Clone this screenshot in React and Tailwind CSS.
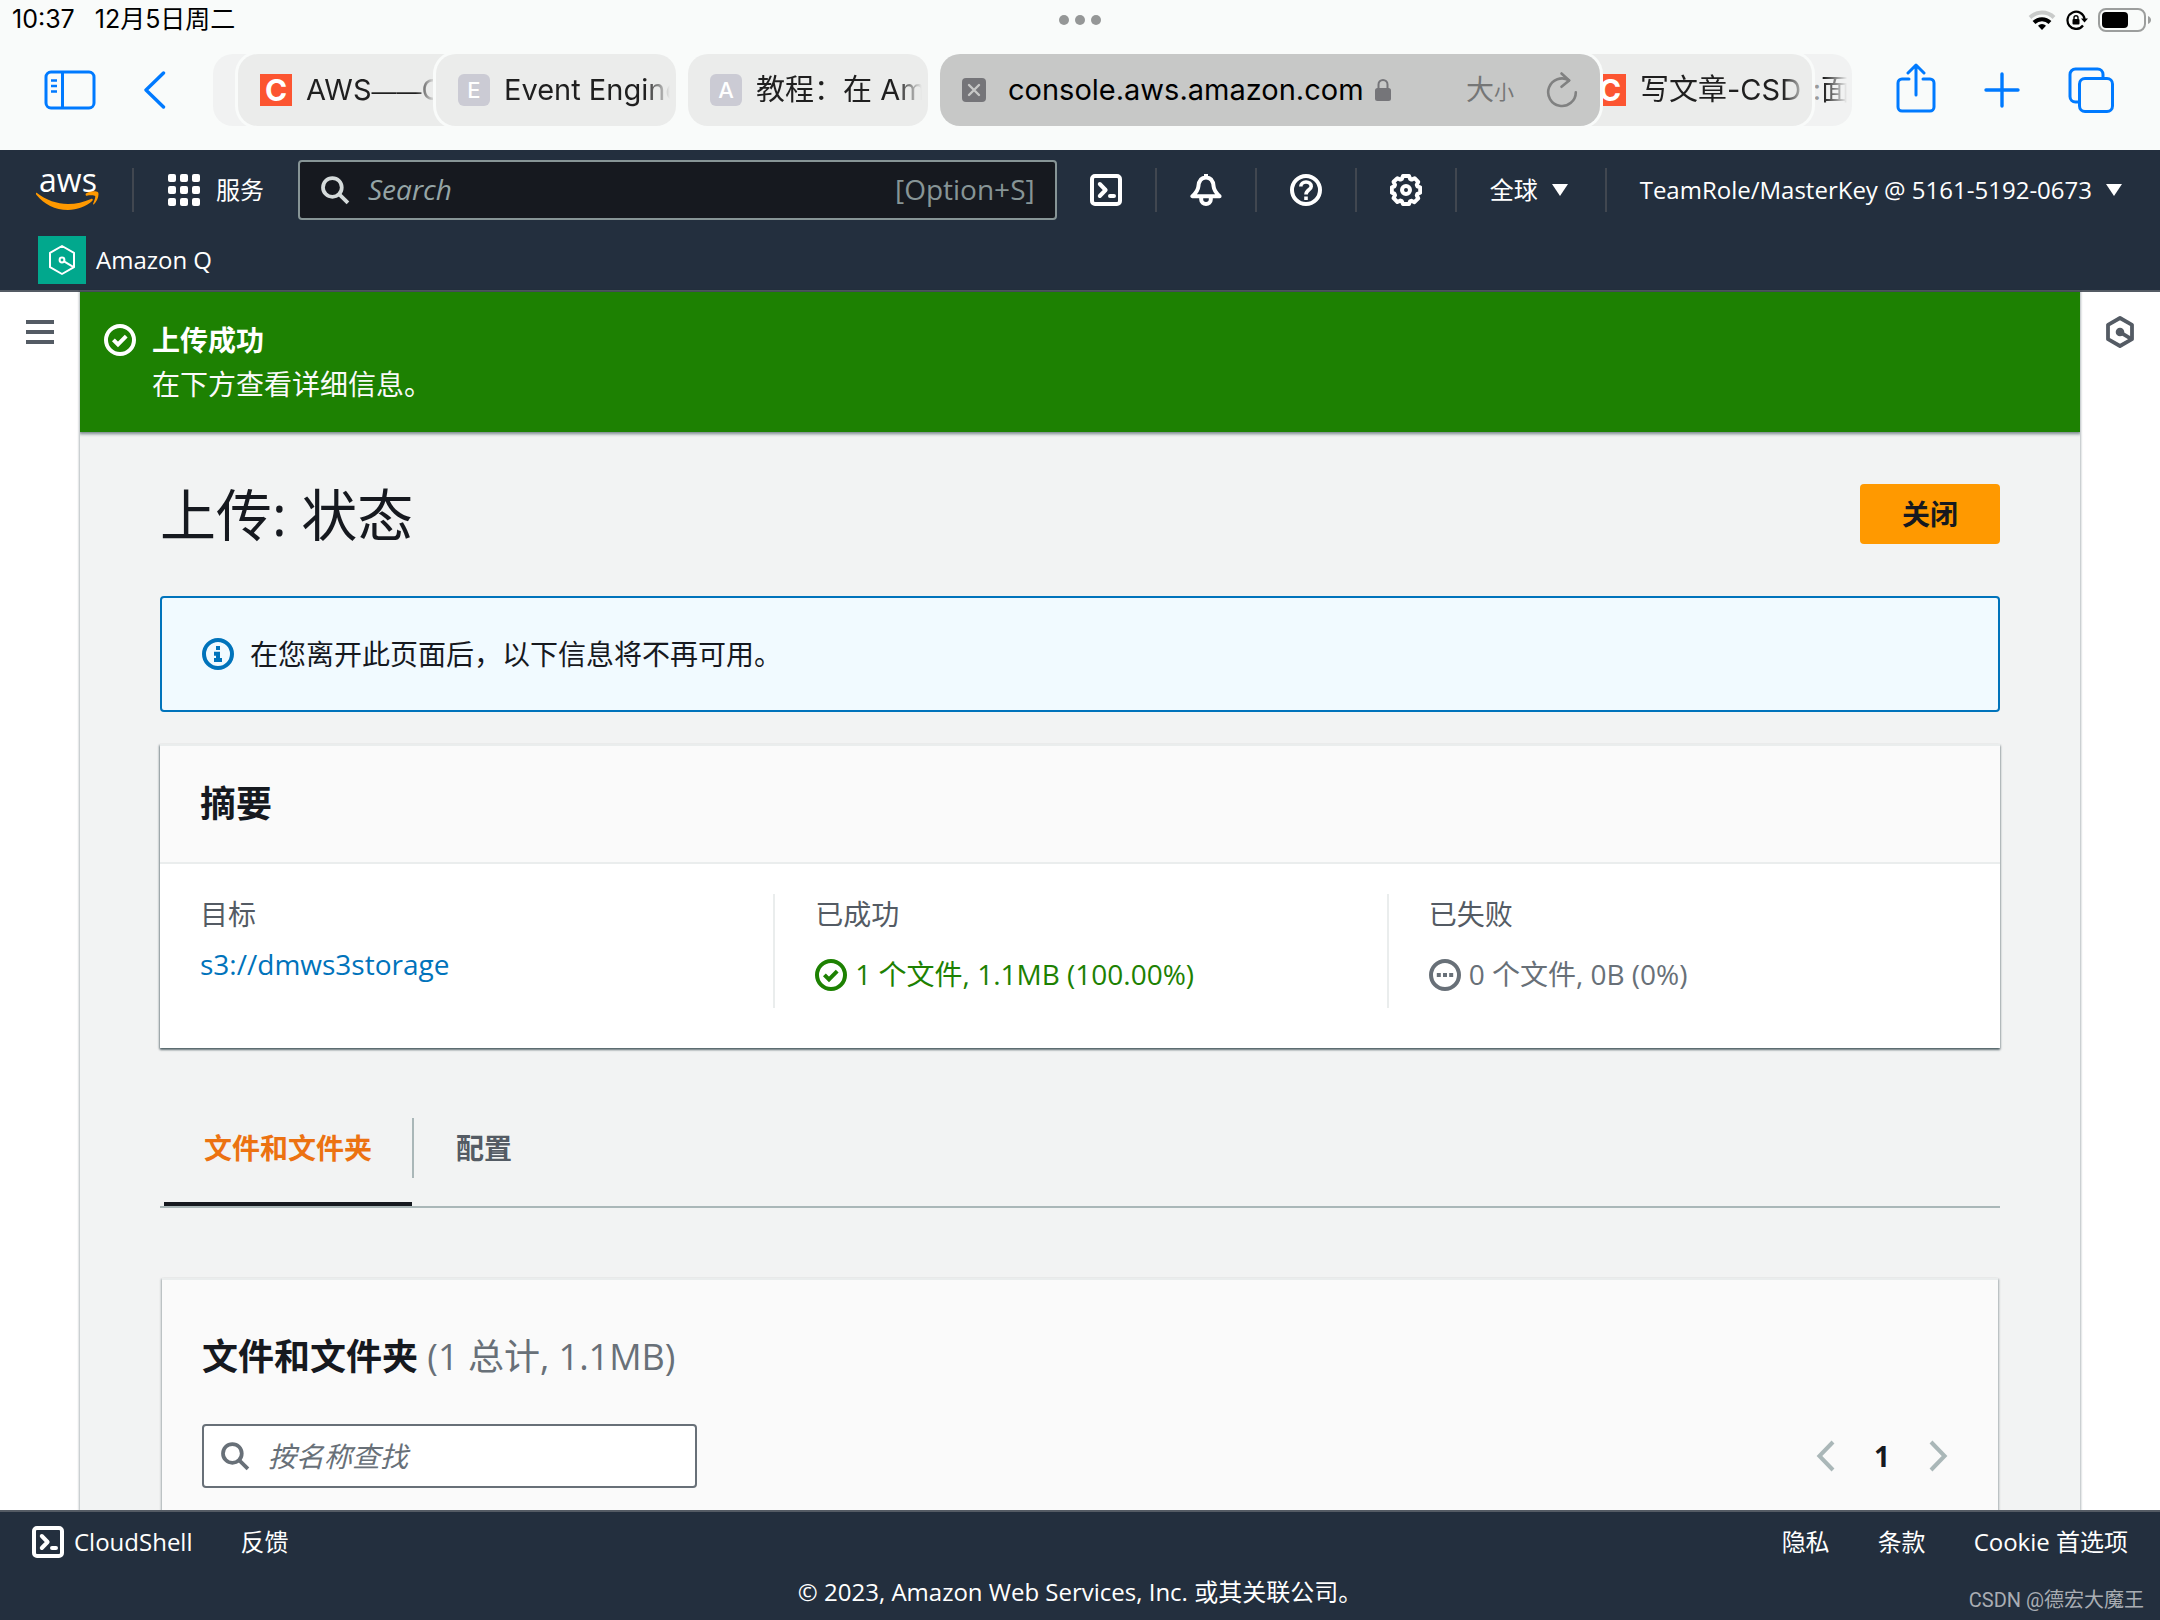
import React from "react";

const awsFont = "font-['Open_Sans','Noto_Sans_CJK_SC',sans-serif]";
const sysFont = "font-['Inter','Noto_Sans_CJK_SC',sans-serif]";

/* ---------- icons ---------- */

function Icon({ className = "size-8", children, ...rest }) {
  return (
    <svg
      viewBox="0 0 16 16"
      className={`shrink-0 ${className}`}
      fill="none"
      stroke="currentColor"
      strokeWidth="2"
      strokeLinejoin="round"
      aria-hidden="true"
      {...rest}
    >
      {children}
    </svg>
  );
}

const CheckCircle = (p) => (
  <Icon {...p}>
    <circle cx="8" cy="8" r="7" />
    <path d="M4.7 7.9l2.3 2.3 4.1-4.1" strokeLinejoin="miter" />
  </Icon>
);
const InfoCircle = (p) => (
  <Icon {...p}>
    <circle cx="8" cy="8" r="7" />
    <path d="M8 11V7.9H6M6 11h4M7 5h2" strokeLinejoin="miter" />
  </Icon>
);
const PendingCircle = (p) => (
  <Icon {...p}>
    <circle cx="8" cy="8" r="7" />
    <path d="M3.9 8h2M7 8h2M10.1 8h2" />
  </Icon>
);
const SearchIcon = (p) => (
  <Icon {...p}>
    <circle cx="6.6" cy="6.6" r="5" />
    <path d="M10.3 10.3l4.6 4.6" />
  </Icon>
);
const ShellIcon = (p) => (
  <Icon {...p}>
    <rect x="1" y="1" width="14" height="14" rx="1.5" />
    <path d="M4.9 5L7.8 8l-2.9 3M10 11h2" strokeLinecap="round" />
  </Icon>
);
const BellIcon = (p) => (
  <Icon {...p}>
    <path d="M8 0v2M1.2 11.1h13.6C13 9.5 12 8.3 11.8 6.2 11.6 3.5 10.3 1.7 8 1.7S4.4 3.5 4.2 6.2C4 8.3 3 9.5 1.2 11.1z" />
    <path d="M5.6 11.5v1.3C5.6 14.2 6.7 15 8 15s2.400-.8 2.400-2.200v-1.300" />
  </Icon>
);
const HelpIcon = (p) => (
  <Icon {...p}>
    <circle cx="8" cy="8" r="7" />
    <path d="M5.4 6.3c0-1.400 1.100-2.300 2.600-2.300s2.600.9 2.600 2.200c0 1.700-2.600 1.700-2.600 4M8 11.200v1.800" strokeWidth="1.8" />
  </Icon>
);
const GearIcon = (p) => (
  <Icon {...p}>
    <path d="M6.5 1h3l.6 1.500.7.3 1.500-.7 1.800 1.800-.7 1.500.3.800 1.400.500v2.600l-1.400.6-.3.800.7 1.500-1.900 1.900-1.500-.7-.7.300L9.500 15h-3l-.6-1.400-.7-.3-1.500.7-1.900-1.900.7-1.500-.3-.8L.9 9.300V6.700l1.300-.5.3-.8-.7-1.500 1.900-1.800 1.500.7.700-.3z" />
    <circle cx="8" cy="8" r="2" />
  </Icon>
);
const QIcon = ({ stroke = 1.5, dot = false, className }) => (
  <Icon className={className} strokeWidth={stroke}>
    <path d="M8 1l6 3.400v7.200L8 15l-6-3.400V4.400z" />
    <circle cx="8" cy="8" r="1.200" fill={dot ? "currentColor" : "none"} />
    <path d="M9 8.700l4.600 2.700" />
  </Icon>
);
const ChevronIcon = ({ flip }) => (
  <Icon className={flip ? "block size-8 rotate-180" : "block size-8"}>
    <path d="M11.5 1L4.7 8l6.800 7" strokeLinejoin="miter" />
  </Icon>
);
const Caret = () => (
  <svg viewBox="0 0 16 12" className="h-3 w-4 shrink-0" fill="currentColor" aria-hidden="true">
    <path d="M0 0h16L8 12z" />
  </svg>
);
const AwsLogo = () => (
  <span className="flex w-16 flex-col items-center">
    <span className="text-[32px] leading-[22px] font-medium text-white">aws</span>
    <svg viewBox="0 0 64 20" className="h-5 w-16" aria-hidden="true">
      <path d="M1 2c9 7 20 11 31 11 8 0 16-2 23-5 1.500-.6 2.500.8 1.200 2C50 15.500 41 19 32 19 19 19 8 13 .5 4-.5 2.500 0 1.500 1 2z" fill="#ff9900" />
      <path d="M50 2.500c3.500-2.500 10-3 12-1.300 1.500 2-.5 9-4 12-.6.5-1.200.2-.9-.5 1-2.300 2.700-6.500 2-7.600-.7-1-5.500-.8-8.400-.4-1 .1-1.500-1.500-.7-2.200z" fill="#ff9900" />
    </svg>
  </span>
);

/* ---------- tablet status bar and browser toolbar ---------- */

function StatusBar() {
  return (
    <div className="grid h-10 grid-cols-[1fr_auto_1fr] items-center px-2 text-[25px] text-black">
      <div className="flex gap-5 pl-1">
        <span>10:37</span>
        <span>12月5日周二</span>
      </div>
      <div className="flex gap-1.5">
        <i className="size-2.5 rounded-full bg-[#959797]" />
        <i className="size-2.5 rounded-full bg-[#959797]" />
        <i className="size-2.5 rounded-full bg-[#959797]" />
      </div>
      <div className="flex items-center justify-end gap-2.5">
        <svg viewBox="0 0 28 20" className="h-5 w-7" fill="none" strokeWidth="4" aria-label="Wi-Fi">
          <path d="M2 7.500a17 17 0 0 1 24 0" stroke="#c9cbca" />
          <path d="M6 12.500a11.500 11.500 0 0 1 16 0" stroke="#000" />
          <path d="M14 20l-4-4.200a5.500 5.500 0 0 1 8 0z" fill="#000" />
        </svg>
        <svg viewBox="0 0 22 20" className="h-5 w-[22px]" fill="none" stroke="#000" strokeWidth="2.200" aria-label="Rotation lock">
          <path d="M17 15.500A8.600 8.600 0 1 1 18.600 9" />
          <path d="M15 8.500h7l-3.500 4z" fill="#000" stroke="none" />
          <rect x="6.500" y="9" width="7" height="5.500" rx="1" fill="#000" stroke="none" />
          <path d="M8 9.500V7.800a2 2 0 0 1 4 0v1.700" strokeWidth="1.400" />
        </svg>
        <svg viewBox="0 0 54 24" className="h-6 w-[54px]" aria-label="Battery">
          <rect x="1" y="1" width="46" height="22" rx="7" fill="none" stroke="#9c9e9d" strokeWidth="2" />
          <rect x="4" y="4" width="26" height="16" rx="4" fill="#000" />
          <path d="M50 8c2 .8 3 2.300 3 4s-1 3.200-3 4z" fill="#9c9e9d" />
        </svg>
      </div>
    </div>
  );
}

const CsdnMark = () => (
  <span className="flex size-8 shrink-0 items-center justify-center bg-[#fc5531] text-[30px] leading-8 font-bold text-white">C</span>
);
const LetterMark = ({ children }) => (
  <span className="flex size-8 shrink-0 items-center justify-center rounded-md bg-[#cbcbd4] text-[22px] font-medium text-white">{children}</span>
);

function Tab({ mark, label, className }) {
  return (
    <button
      type="button"
      className={`flex h-18 w-60 shrink-0 items-center gap-3.5 overflow-hidden rounded-[20px] pl-[22px] text-[#1f1f1f] ring-3 ring-[#f9fbfa] ${className}`}
    >
      {mark}
      <span className="flex-1 overflow-hidden text-left whitespace-nowrap [mask-image:linear-gradient(to_right,black_85%,transparent)]">{label}</span>
    </button>
  );
}

function BrowserBar() {
  const tool = "shrink-0 text-[#007aff]";
  return (
    <div className="flex h-[110px] items-start pt-3.5 pr-[46px] pl-11 text-[29px]">
      <div className="flex h-18 items-center gap-12">
        <button type="button" aria-label="Sidebar" className={tool}>
          <svg viewBox="0 0 52 40" className="h-10 w-[52px]" fill="none" stroke="currentColor" strokeWidth="3">
            <rect x="2" y="2" width="48" height="36" rx="5" />
            <path d="M18.500 2v36" />
            <path d="M7 10.500h6M7 16h6M7 21.500h6" strokeWidth="2.600" />
          </svg>
        </button>
        <button type="button" aria-label="Back" className={tool}>
          <svg viewBox="0 0 22 38" className="h-[38px] w-[22px]" fill="none" stroke="currentColor" strokeWidth="3.400" strokeLinecap="round" strokeLinejoin="round">
            <path d="M19.500 2L2 19l17.500 17" />
          </svg>
        </button>
      </div>

      <div className="ml-[47px] flex flex-1">
        <Tab className="bg-[#f1f2f2]" />
        <Tab
          className="z-10 -ml-[215px] bg-[#ebeceb] pr-[43px]"
          mark={<CsdnMark />}
          label={<>AWS<span className="font-['Liberation_Sans'] text-[25px]">——</span>C</>}
        />
        <Tab className="z-20 -ml-[42px] bg-[#ebeceb] pr-1.5" mark={<LetterMark>E</LetterMark>} label="Event Engine" />
        <Tab className="z-20 ml-3 bg-[#ebeceb] pr-1.5" mark={<LetterMark>A</LetterMark>} label="教程：在 Am" />
        <div className="z-30 ml-3 flex h-18 flex-1 items-center rounded-[20px] bg-[#c7c8c7] px-[22px] ring-3 ring-[#f9fbfa]">
          <button type="button" aria-label="Close tab" className="shrink-0">
            <svg viewBox="0 0 24 24" className="block size-6">
              <rect width="24" height="24" rx="4" fill="#757579" />
              <path d="M7 7l10 10M17 7L7 17" stroke="#c7c8c7" strokeWidth="2.400" strokeLinecap="round" />
            </svg>
          </button>
          <span className="ml-[22px] text-black">console.aws.amazon.com</span>
          <svg viewBox="0 0 18 24" className="ml-2.5 h-6 w-[18px] shrink-0" aria-label="Secure">
            <rect x="1" y="10" width="16" height="13" rx="2.500" fill="#757579" />
            <path d="M4.500 11V6.500a4.500 4.500 0 0 1 9 0V11" fill="none" stroke="#757579" strokeWidth="2" />
          </svg>
          <button type="button" className="ml-auto text-[28px] text-[#757676]">
            大<span className="text-[20px]">小</span>
          </button>
          <button type="button" aria-label="Reload" className="ml-8 shrink-0 text-[#808181]">
            <svg viewBox="0 0 32 38" className="block h-[38px] w-8" fill="none" stroke="currentColor" strokeWidth="2.600" strokeLinecap="round" strokeLinejoin="round">
              <path d="M23 9.300a13.800 13.800 0 1 0 6.800 11.900" />
              <path d="M15.500 2.500l7.700 7-7.700 6.300" />
            </svg>
          </button>
        </div>
        <Tab className="z-20 -ml-7 bg-[#ebeceb] pr-1" mark={<CsdnMark />} label="写文章-CSD" />
        <button type="button" className="-ml-50 flex h-18 w-60 shrink-0 items-center justify-end rounded-[20px] bg-[#f1f2f2] pr-0.5 text-[#1f1f1f]">
          <span className="text-[#9a9b9b]">:</span>
          <span className="[mask-image:linear-gradient(to_right,black_10%,transparent_90%)]">面</span>
        </button>
      </div>

      <div className="ml-11 flex h-18 items-center gap-12">
        <button type="button" aria-label="Share" className={tool}>
          <svg viewBox="0 0 40 50" className="mb-1 block h-[50px] w-10" fill="none" stroke="currentColor" strokeWidth="3" strokeLinecap="round" strokeLinejoin="round">
            <path d="M13 16H6a4 4 0 0 0-4 4v24a4 4 0 0 0 4 4h28a4 4 0 0 0 4-4V20a4 4 0 0 0-4-4h-7" />
            <path d="M20 32V2.500M12 10l8-8 8 8" />
          </svg>
        </button>
        <button type="button" aria-label="New tab" className={tool}>
          <svg viewBox="0 0 36 36" className="block size-9" stroke="currentColor" strokeWidth="3.400" strokeLinecap="round">
            <path d="M18 2v32M2 18h32" />
          </svg>
        </button>
        <button type="button" aria-label="Tab overview" className={tool}>
          <svg viewBox="0 0 46 46" className="block size-[46px]" fill="none" stroke="currentColor" strokeWidth="3">
            <path d="M11 35H7.500A5.500 5.500 0 0 1 2 29.500v-22A5.500 5.500 0 0 1 7.500 2h22A5.500 5.500 0 0 1 35 7.500V11" />
            <rect x="11.500" y="11.500" width="33" height="33" rx="5.500" />
          </svg>
        </button>
      </div>
    </div>
  );
}

/* ---------- console ---------- */

const Divider = () => <i className="block h-11 w-0.5 shrink-0 bg-[#414750]" />;

function ConsoleHeader() {
  return (
    <header className="border-b-2 border-[#545b64] bg-[#232f3e] text-2xl text-white">
      <div className="flex h-20 items-center pr-[38px] pl-9">
        <a href="#home" aria-label="AWS">
          <AwsLogo />
        </a>
        <div className="ml-8">
          <Divider />
        </div>
        <button type="button" className="ml-[34px] flex shrink-0 items-center gap-4">
          <svg viewBox="0 0 32 32" className="size-8" fill="currentColor" aria-hidden="true">
            {[0, 12, 24].map((y) =>
              [0, 12, 24].map((x) => <rect key={`${x}-${y}`} x={x} y={y} width="8" height="8" rx="2" />)
            )}
          </svg>
          服务
        </button>
        <label className="ml-[34px] flex h-15 flex-1 items-center rounded-sm border-2 border-[#879596] bg-[#16191f] px-5 text-[28px] text-[#879596]">
          <SearchIcon className="size-[30px] text-[#d5dbdb]" />
          <input type="text" aria-label="Search" placeholder="Search" className="ml-[18px] min-w-0 flex-1 bg-transparent outline-none placeholder:text-[#95a5a6] placeholder:italic" />
          <span>[Option+S]</span>
        </label>
        <div className="ml-[33px] flex items-center gap-[33px]">
          <button type="button" aria-label="CloudShell"><ShellIcon className="block size-8" /></button>
          <Divider />
          <button type="button" aria-label="Notifications"><BellIcon className="block size-8" /></button>
          <Divider />
          <button type="button" aria-label="Help"><HelpIcon className="block size-8" /></button>
          <Divider />
          <button type="button" aria-label="Settings"><GearIcon className="block size-8" /></button>
          <Divider />
          <button type="button" className="flex items-center gap-3.5 pr-1 whitespace-nowrap">全球 <Caret /></button>
          <Divider />
          <button type="button" className="flex items-center gap-3.5 whitespace-nowrap">
            TeamRole/MasterKey @ 5161-5192-0673 <Caret />
          </button>
        </div>
      </div>
      <div className="flex h-15 items-center pl-9.5">
        <a href="#amazon-q" className="flex items-center gap-2.5">
          <span className="flex size-12 items-center justify-center bg-[#01a88d]">
            <QIcon className="size-8" stroke={1} />
          </span>
          Amazon Q
        </a>
      </div>
    </header>
  );
}

function Summary() {
  return (
    <section className="mt-8 border-t-2 border-[#eaeded] bg-white shadow-[0_2px_2px_0_rgba(0,28,36,0.5),1px_1px_2px_0_rgba(0,28,36,0.15),-1px_1px_2px_0_rgba(0,28,36,0.3)]">
      <div className="flex h-[118px] items-center border-b-2 border-[#eaeded] bg-[#fafafa] px-10">
        <h2 className="text-[36px] font-bold">摘要</h2>
      </div>
      <dl className="grid h-46 grid-cols-3 pt-[30px] pb-10 leading-10">
        <div className="pl-10">
          <dt className="text-[#545b64]">目标</dt>
          <dd className="mt-2.5"><a href="#bucket" className="text-[#0073bb]">s3://dmws3storage</a></dd>
        </div>
        <div className="border-l-2 border-[#eaeded] pl-10">
          <dt className="text-[#545b64]">已成功</dt>
          <dd className="mt-5 flex items-center gap-2 text-[#1d8102]"><CheckCircle className="mt-0.5 size-8" />1 个文件, 1.1MB (100.00%)</dd>
        </div>
        <div className="border-l-2 border-[#eaeded] pl-10">
          <dt className="text-[#545b64]">已失败</dt>
          <dd className="mt-5 flex items-center gap-2 text-[#687078]"><PendingCircle className="mt-0.5 size-8" />0 个文件, 0B (0%)</dd>
        </div>
      </dl>
    </section>
  );
}

function Tabs() {
  return (
    <div role="tablist" className="mt-15 flex items-stretch border-b-2 border-[#aab7b8] pl-1 leading-10 font-bold">
      <button type="button" role="tab" aria-selected="true" className="border-b-4 border-[#16191f] px-10 pt-5 pb-[34px] text-[#ec7211]">
        文件和文件夹
      </button>
      <i className="mt-2.5 mr-0.5 h-15 w-0.5 bg-[#aab7b8]" />
      <button type="button" role="tab" aria-selected="false" className="border-b-4 border-transparent px-10 pt-5 pb-[34px] text-[#545b64]">
        配置
      </button>
    </div>
  );
}

function Files() {
  return (
    <section className="mx-0.5 mt-[70px] h-100 border-t-2 border-[#eaeded] bg-[#fafafa] px-10 shadow-[1px_1px_2px_0_rgba(0,28,36,0.3),-1px_1px_2px_0_rgba(0,28,36,0.3)]">
      <h2 className="pt-[50px] text-[36px] leading-[54px] font-bold">
        文件和文件夹 <span className="font-normal text-[#687078]">(1 总计, 1.1MB)</span>
      </h2>
      <div className="mt-10 flex items-center justify-between">
        <label className="flex h-16 w-[495px] items-center rounded-sm border-2 border-[#687078] bg-white px-4 text-[#687078]">
          <SearchIcon className="size-[30px]" />
          <input type="text" aria-label="按名称查找" placeholder="按名称查找" className="ml-[18px] min-w-0 flex-1 bg-transparent outline-none placeholder:text-[#687078] placeholder:italic" />
        </label>
        <nav aria-label="Pagination" className="flex items-center gap-8 pr-1 text-[#aab7b8]">
          <button type="button" aria-label="Previous page"><ChevronIcon /></button>
          <button type="button" className="text-[28px] font-bold text-[#16191f]">1</button>
          <button type="button" aria-label="Next page"><ChevronIcon flip /></button>
        </nav>
      </div>
    </section>
  );
}

function Footer() {
  return (
    <footer className="z-10 border-t-2 border-[#545b64] bg-[#232f3e] px-8 text-2xl text-white">
      <div className="flex h-15 items-center">
        <button type="button" className="flex items-center gap-2.5"><ShellIcon />CloudShell</button>
        <a href="#feedback" className="ml-12">反馈</a>
        <div className="ml-auto flex gap-12">
          <a href="#privacy">隐私</a>
          <a href="#terms">条款</a>
          <a href="#cookies">Cookie 首选项</a>
        </div>
      </div>
      <div className="relative flex h-12 justify-center">
        <p className="leading-10">© 2023, Amazon Web Services, Inc. 或其关联公司。</p>
        <span className="absolute -right-4 bottom-1 font-['Roboto','Noto_Sans_CJK_SC',sans-serif] text-[20px] leading-8 text-[#a9adb3]">CSDN @德宏大魔王</span>
      </div>
    </footer>
  );
}

export default function App() {
  return (
    <div className="flex h-screen flex-col overflow-hidden bg-white">
      <div className={`bg-[#f9fbfa] ${sysFont}`}>
        <StatusBar />
        <BrowserBar />
      </div>
      <div className={`flex min-h-0 flex-1 flex-col text-[28px] text-[#16191f] ${awsFont}`}>
        <ConsoleHeader />
        <div className="flex min-h-0 flex-1">
          <aside className="w-20 shrink-0 pt-7 pl-6.5">
            <button type="button" aria-label="Menu" className="flex w-7 flex-col gap-1.5">
              <i className="h-1 bg-[#545b64]" />
              <i className="h-1 bg-[#545b64]" />
              <i className="h-1 bg-[#545b64]" />
            </button>
          </aside>
          <main className="min-w-0 flex-1 overflow-hidden bg-[#f2f3f3] shadow-[0_0_2px_1px_rgba(0,28,36,0.3)]">
            <div role="status" className="flex gap-4 bg-[#1d8102] px-6 py-6.5 leading-[44px] text-white shadow-[0_1px_3px_1px_rgba(0,28,36,0.5)]">
              <CheckCircle className="mt-1.5 size-8" />
              <div>
                <p className="font-bold">上传成功</p>
                <p className="text-[#fafafa]">在下方查看详细信息。</p>
              </div>
            </div>
            <div className="px-20">
              <div className="flex items-center justify-between py-[38px]">
                <h1 className="text-[56px] leading-[88px]">上传: 状态</h1>
                <button type="button" className="h-15 rounded-sm bg-[#ff9900] px-[42px] font-bold">关闭</button>
              </div>
              <div role="note" className="flex h-29 items-center gap-4 rounded-sm border-2 border-[#0073bb] bg-[#f1faff] px-10">
                <InfoCircle className="size-8 text-[#0073bb]" />
                在您离开此页面后，以下信息将不再可用。
              </div>
              <Summary />
              <Tabs />
              <Files />
            </div>
          </main>
          <aside className="w-20 shrink-0 pt-6 pl-6">
            <button type="button" aria-label="Amazon Q" className="text-[#545b64]">
              <QIcon className="block size-8" stroke={1.9} dot />
            </button>
          </aside>
        </div>
        <Footer />
      </div>
    </div>
  );
}
